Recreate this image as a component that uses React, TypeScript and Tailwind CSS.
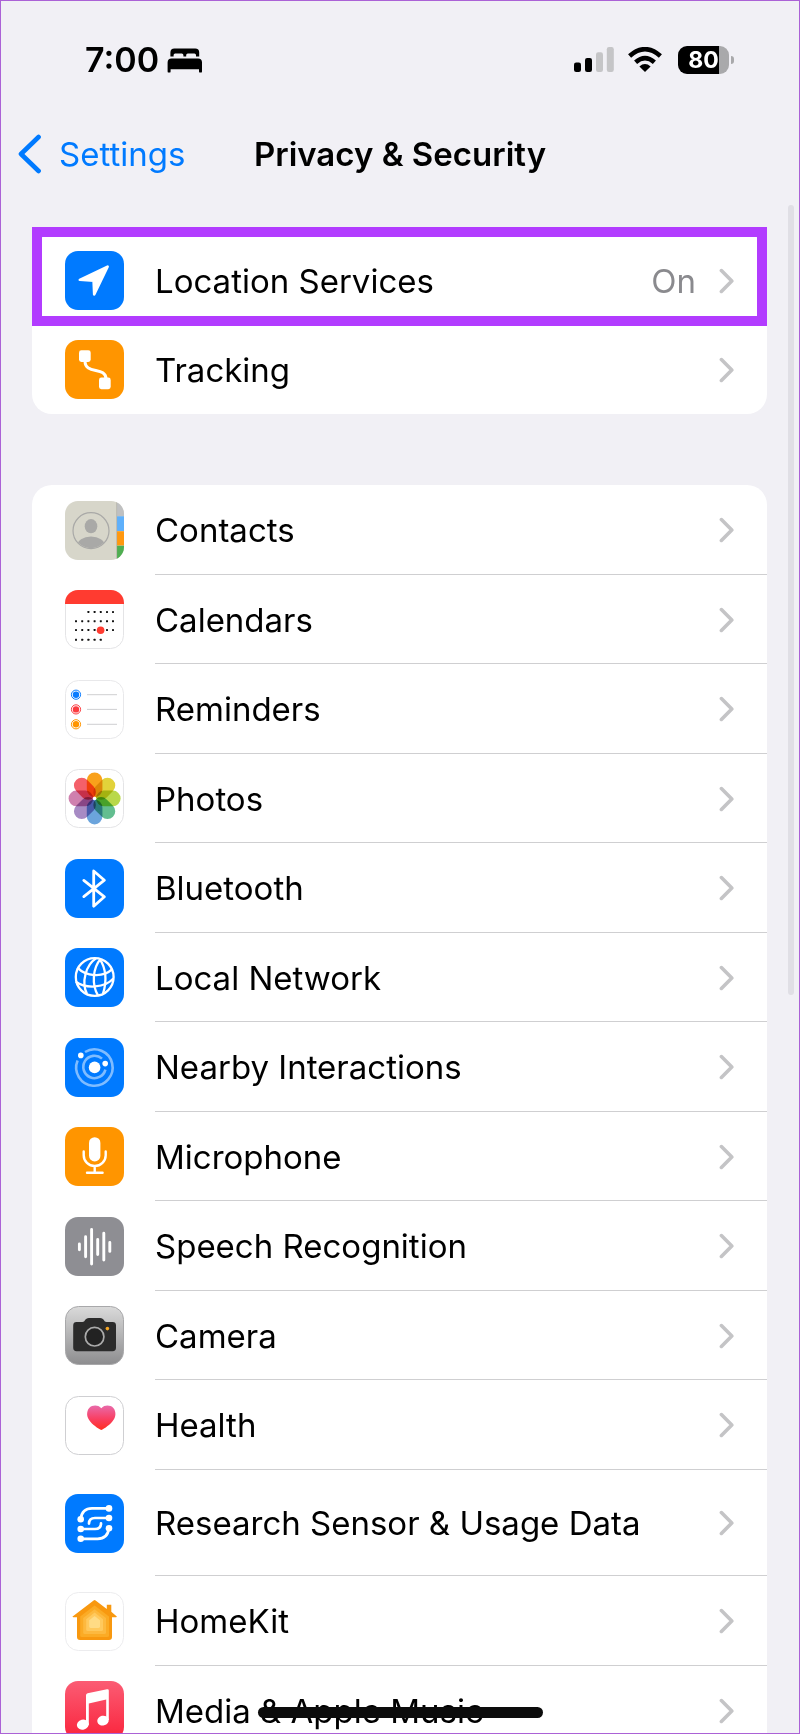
import type { ReactNode } from 'react';

const BLUE = '#007aff';
const ORANGE = '#ff9500';

function Tile({ fill, stroke, children }: { fill: string; stroke?: string; children?: ReactNode }) {
  return (
    <svg viewBox="0 0 59 59" className="size-[59px] shrink-0" fill="none" aria-hidden="true">
      <rect x={stroke ? 0.5 : 0} y={stroke ? 0.5 : 0} width={stroke ? 58 : 59} height={stroke ? 58 : 59} rx="13" fill={fill} stroke={stroke} />
      {children}
    </svg>
  );
}

const LocationIcon = () => (
  <Tile fill={BLUE}>
    <path d="M42.6 15.6 29.2 43.4 28.6 29.8 14.8 28.8Z" fill="#fff" stroke="#fff" strokeWidth="2.6" strokeLinejoin="round" />
  </Tile>
);

const TrackingIcon = () => (
  <Tile fill={ORANGE}>
    <rect x="14" y="10.3" width="11.7" height="11.7" rx="2.4" fill="#fff" />
    <rect x="34" y="37.5" width="11.7" height="11.7" rx="2.4" fill="#fff" />
    <path d="M20 21c0 14 21 5 21 18" stroke="#fff" strokeWidth="3" />
  </Tile>
);

const ContactsIcon = () => (
  <Tile fill="#d7d6ca">
    <clipPath id="contacts-tile"><rect width="59" height="59" rx="13" /></clipPath>
    <clipPath id="contacts-disc"><circle cx="26" cy="29.7" r="17.5" /></clipPath>
    <g clipPath="url(#contacts-tile)">
      <path d="M52 0h7v15h-7z" fill="#bfc0c1" />
      <path d="M52 15.3h7V30h-7z" fill="#5fb0fb" />
      <path d="M52 30.3h7v14.2h-7z" fill="#ff9810" />
      <path d="M52 44.8h7V59h-7z" fill="#4fae51" />
      <path d="M51.6 0v59" stroke="#b4b3a9" strokeWidth=".8" />
    </g>
    <circle cx="26" cy="29.7" r="18" stroke="#a9a9a7" strokeWidth="1.2" />
    <ellipse cx="26" cy="25.2" rx="6.3" ry="7.1" fill="#a9a9a7" />
    <ellipse cx="26" cy="45" rx="14" ry="9.6" fill="#a9a9a7" clipPath="url(#contacts-disc)" />
  </Tile>
);

const dotColumns = [11, 17.2, 23.4, 29.6, 35.8, 42, 48];
const dotRows = [
  { y: 22, from: 2, to: 7 },
  { y: 31.2, from: 0, to: 7 },
  { y: 40, from: 0, to: 7 },
  { y: 49.8, from: 0, to: 5 },
];

const CalendarIcon = () => (
  <Tile fill="#fff" stroke="#e4e4e6">
    <path d="M0 14V13A13 13 0 0 1 13 0H46A13 13 0 0 1 59 13V14Z" fill="#ff3b30" />
    {dotRows.map((row) =>
      dotColumns.slice(row.from, row.to).map((x) => (
        <rect key={`${x}-${row.y}`} x={x - 1} y={row.y - 1} width="2" height="2" rx=".4" fill="#111" />
      )),
    )}
    <circle cx="35.6" cy="40.2" r="3.8" fill="#ff3b30" />
  </Tile>
);

const reminderDots = [
  { y: 14.7, color: '#0a7cff' },
  { y: 29.4, color: '#fb3b3f' },
  { y: 44.3, color: '#ff9500' },
];

const RemindersIcon = () => (
  <Tile fill="#fff" stroke="#e8e8ea">
    {reminderDots.map(({ y, color }) => (
      <g key={y}>
        <circle cx="11" cy={y} r="4.6" stroke={color} strokeWidth="1" />
        <circle cx="11" cy={y} r="3.2" fill={color} />
        <path d={`M22 ${y}H52`} stroke="#c9c9cc" strokeWidth=".9" />
      </g>
    ))}
  </Tile>
);

const petals = ['#f9a11b', '#e2d23a', '#b9d84a', '#63be90', '#6ba4dc', '#a78bc4', '#cf80ae', '#f4606a'];

const PhotosIcon = () => (
  <Tile fill="#fff" stroke="#e4e4e6">
    <g style={{ isolation: 'isolate' }}>
      {petals.map((color, i) => (
        <rect
          key={color}
          x="21.8"
          y="3.4"
          width="15.6"
          height="24.6"
          rx="7.8"
          fill={color}
          style={{ mixBlendMode: 'multiply' }}
          transform={`rotate(${i * 45} 29.6 29.4)`}
        />
      ))}
    </g>
    <circle cx="29.6" cy="29.4" r="1.6" fill="#fff" />
  </Tile>
);

const BluetoothIcon = () => (
  <Tile fill={BLUE}>
    <path d="M18.8 21.4 39.4 37.8 28.7 47.2V12L39.4 21.2 18.8 37.6" stroke="#fff" strokeWidth="2.8" strokeLinecap="round" strokeLinejoin="round" />
  </Tile>
);

const GlobeIcon = () => (
  <Tile fill={BLUE}>
    <g stroke="#fff" strokeWidth="2.3">
      <circle cx="29.7" cy="29" r="18.9" />
      <path d="M31 10.4C21 17 16 34 22 46" />
      <path d="M35.6 11C27.6 20 26.6 37 33 47.4" />
      <path d="M34.6 10.8C41 20 42.2 33 38 45.6" />
      <path d="M12.4 19.6C21 28.6 38 29.8 47 21.4" />
      <path d="M10.8 33.8C21 41 40 40 48.4 30.6" />
    </g>
  </Tile>
);

const NearbyIcon = () => (
  <Tile fill={BLUE}>
    <g stroke="#7fbcff" strokeWidth="2.6">
      <path d="M20 14A18.2 18.2 0 1 1 12.6 22.6" />
      <path d="M40.4 31.6A11.2 11.2 0 1 1 37 20.6" />
    </g>
    <g fill="#fff">
      <circle cx="29.6" cy="29.4" r="5.8" />
      <circle cx="15.8" cy="17.4" r="2.8" />
      <circle cx="40.2" cy="25.6" r="2.8" />
    </g>
  </Tile>
);

const MicrophoneIcon = () => (
  <Tile fill={ORANGE}>
    <rect x="24" y="10.2" width="11.4" height="24.2" rx="5.7" fill="#fff" />
    <path d="M18.7 24.4v3.8a11 10.8 0 0 0 22 0v-3.8M29.7 39v6.6M22 45.8h15.6" stroke="#fff" strokeWidth="2.4" strokeLinecap="round" />
  </Tile>
);

const SpeechIcon = () => (
  <Tile fill="#8e8e93">
    <path d="M14.4 27v5.8M20.6 19.8v20M26.6 12.4v34.6M32.7 22.4v15.2M38.8 16.2v26.8M44.8 25.4v9" stroke="#fff" strokeWidth="2.9" strokeLinecap="round" />
  </Tile>
);

const CameraIcon = () => (
  <Tile fill="url(#camera-bg)" stroke="#a8a8aa">
    <linearGradient id="camera-bg" x1="0" y1="0" x2="0" y2="1">
      <stop stopColor="#dadada" />
      <stop offset="1" stopColor="#8d8d8f" />
    </linearGradient>
    <path d="M8.2 19.4Q8.2 16 11.6 16H17.4C20.4 16 19.6 12 24 12H35C39.4 12 38.6 16 41.6 16H47.6Q51 16 51 19.4V41.8Q51 45.2 47.6 45.2H11.6Q8.2 45.2 8.2 41.8Z" fill="#2b2b2b" />
    <circle cx="29.6" cy="30.7" r="9.3" fill="#222" stroke="#ababab" strokeWidth="1.7" />
    <circle cx="42.4" cy="22.6" r="1.8" fill="#f6a623" />
  </Tile>
);

const HealthIcon = () => (
  <Tile fill="#fff" stroke="#cfcfd2">
    <linearGradient id="heart" x1="0" y1="0" x2="0" y2="1">
      <stop stopColor="#e86bab" />
      <stop offset=".55" stopColor="#f93f62" />
      <stop offset="1" stopColor="#ff2f20" />
    </linearGradient>
    <path d="M36.3 12.2C39 9 43 9 45.6 10C50 11.8 51.6 17.4 49.6 22C47.4 27 41.6 31 37.4 33.6Q36.3 34.2 35.2 33.6C31 31 25.2 27 23 22C21 17.4 22.6 11.8 27 10C29.6 9 33.6 9 36.3 12.2Z" fill="url(#heart)" />
  </Tile>
);

const ResearchIcon = () => (
  <Tile fill={BLUE}>
    <path
      d="M15.7 25C16.6 18 20.4 14.4 27 14.4H44M24 29.6C24 26 26 24 30 24H44M15.7 35H30C34 35 36 33 36 29.4M15.7 44.8H32.6C39 44.8 43 41.2 44 34.2"
      stroke="#fff"
      strokeWidth="2.7"
      strokeLinecap="round"
    />
    <g fill="#fff">
      <circle cx="15.7" cy="25.2" r="3.3" />
      <circle cx="44" cy="14.4" r="3.3" />
      <circle cx="44" cy="24" r="3.3" />
      <circle cx="15.7" cy="35" r="3.3" />
      <circle cx="44" cy="34.2" r="3.3" />
      <circle cx="15.7" cy="44.8" r="3.3" />
    </g>
  </Tile>
);

const HomeIcon = () => (
  <Tile fill="#fff" stroke="#ececee">
    <path d="M41.8 12.8H46.3V19.8L51.8 24.4Q52 25.2 51 25.2H47V45Q47 48 44 48H15Q12 48 12 45V25.2H8.4Q7.2 25.2 7.6 24.4L28.6 8.4Q29.6 7.6 30.6 8.4L41.8 17Z" fill="#f8980f" />
    <path d="M29.6 13.4 44 24.4V43.4Q44 45 42.4 45H16.8Q15.2 45 15.2 43.4V24.4Z" fill="#fbab25" />
    <path d="M29.6 17.2 41 26V40.4Q41 42 39.4 42H19.8Q18.2 42 18.2 40.4V26Z" fill="#fdb93f" />
    <path d="M29.6 20.6 38 27.2V37.4Q38 39 36.4 39H22.8Q21.2 39 21.2 37.4V27.2Z" fill="#ffc95d" />
    <path d="M29.6 24 35 28.2V34.6Q35 36 33.6 36H25.6Q24.2 36 24.2 34.6V28.2Z" fill="#ffdb85" />
  </Tile>
);

const MusicIcon = () => (
  <Tile fill="url(#music-bg)">
    <linearGradient id="music-bg" x1="0" y1="0" x2="0" y2="1">
      <stop stopColor="#fb5c74" />
      <stop offset="1" stopColor="#fa233b" />
    </linearGradient>
    <g fill="#fff">
      <path d="M21 14.2Q21 12.6 22.6 12.2L42 8.2Q43.8 7.8 43.8 9.6V39H41.2V18.6L23.8 22.4V44H21Z" />
      <ellipse cx="17.8" cy="43.6" rx="6" ry="5" transform="rotate(-14 17.8 43.6)" />
      <ellipse cx="38" cy="39.6" rx="5.8" ry="4.9" transform="rotate(-14 38 39.6)" />
    </g>
  </Tile>
);

interface Item {
  label: string;
  icon: () => ReactNode;
  value?: string;
  tall?: boolean;
  struck?: string;
}

const trackingItems: Item[] = [
  { label: 'Location Services', icon: LocationIcon, value: 'On' },
  { label: 'Tracking', icon: TrackingIcon },
];

const accessItems: Item[] = [
  { label: 'Contacts', icon: ContactsIcon },
  { label: 'Calendars', icon: CalendarIcon },
  { label: 'Reminders', icon: RemindersIcon },
  { label: 'Photos', icon: PhotosIcon },
  { label: 'Bluetooth', icon: BluetoothIcon },
  { label: 'Local Network', icon: GlobeIcon },
  { label: 'Nearby Interactions', icon: NearbyIcon },
  { label: 'Microphone', icon: MicrophoneIcon },
  { label: 'Speech Recognition', icon: SpeechIcon },
  { label: 'Camera', icon: CameraIcon },
  { label: 'Health', icon: HealthIcon },
  { label: 'Research Sensor & Usage Data', icon: ResearchIcon, tall: true },
  { label: 'HomeKit', icon: HomeIcon },
  { label: 'Media', icon: MusicIcon, struck: '& Apple Music' },
];

function Row({ item, divided }: { item: Item; divided: boolean }) {
  const Icon = item.icon;
  return (
    <a href="#" className={`flex items-center pl-[33px] ${item.tall ? 'h-[106px]' : 'h-[90px] group-even:h-[89px]'}`}>
      <Icon />
      <span className={`ml-[31px] flex flex-1 items-center self-stretch pt-px pr-[33px] ${divided ? 'border-b border-[#cfcfd1]' : ''}`}>
        <span className="flex-1 whitespace-nowrap">
          {item.label}
          {item.struck && (
            <>
              {' '}
              <span className="relative">
                {item.struck}
                <span className="absolute top-4 -left-0.5 h-[11px] w-[285px] rounded-full bg-[#0c0c0c]" />
              </span>
            </>
          )}
        </span>
        {item.value && <span className="mr-[23px] text-[#8a8a8e]">{item.value}</span>}
        <svg viewBox="0 0 15 26" className="h-[26px] w-[15px] shrink-0" fill="none" aria-hidden="true">
          <path d="M2.4 2.6 12.8 13 2.4 23.4" stroke="#c4c4c6" strokeWidth="3.6" strokeLinecap="round" strokeLinejoin="round" />
        </svg>
      </span>
    </a>
  );
}

function StatusBar() {
  return (
    <div className="flex h-[118px] items-center justify-between pr-[65px] pl-[84px]">
      <div className="flex items-center gap-2">
        <time className="text-[34px] leading-10 font-semibold">7:00</time>
        <svg viewBox="0 0 36 25" className="h-[25px] w-9" aria-hidden="true">
          <path d="M3.4 8.4V4.4Q3.4.4 7.4.4H28.2Q32.2.4 32.2 4.4V8.4H29V7Q29 5.4 27.4 5.4H20.8Q19.2 5.4 19.2 7V8.4H16.4V7Q16.4 5.4 14.8 5.4H8.2Q6.6 5.4 6.6 7V8.4Z" />
          <path d="M.6 14.6Q.6 10.6 4.6 10.6H31Q35 10.6 35 14.6V23.4Q35 24.6 33.8 24.6H33.2Q32 24.6 32 23.4V21.2H3.6V23.4Q3.6 24.6 2.4 24.6H1.8Q.6 24.6 .6 23.4Z" />
        </svg>
      </div>
      <div className="flex items-center">
        <svg viewBox="0 0 40 26" className="h-[26px] w-10" aria-hidden="true">
          <rect x="0" y="15.4" width="7" height="9.6" rx="2.2" />
          <rect x="11" y="11" width="7" height="14" rx="2.2" />
          <rect x="22" y="5.2" width="7" height="19.8" rx="2.2" fill="#c5c5c7" />
          <rect x="32.8" y="0" width="7" height="25" rx="2.2" fill="#c5c5c7" />
        </svg>
        <svg viewBox="0 0 34 26" className="ml-3.5 h-[26px] w-[34px]" aria-hidden="true">
          <path d="M17 25 11.4 19.4Q17 14.6 22.6 19.4Z" />
          <path d="M7.6 15.2Q17 7 26.4 15.2" fill="none" stroke="#000" strokeWidth="4.6" />
          <path d="M1.6 9Q17-4.6 32.4 9" fill="none" stroke="#000" strokeWidth="4.6" />
        </svg>
        <div className="ml-4 flex h-7 w-[51px] items-center justify-center overflow-hidden rounded-[9px] bg-linear-to-r from-black from-80% to-[#a9a9ab] to-80% text-[23px] leading-7 font-bold text-white">
          80
        </div>
        <span className="ml-0.5 h-2 w-[3px] rounded-r-full bg-[#a9a9ab]" />
      </div>
    </div>
  );
}

export default function App() {
  return (
    <div className="relative h-screen overflow-hidden border border-[#ab62d6] bg-[#f1f0f5] font-['Inter','Liberation_Sans',sans-serif] text-[33px] leading-10 text-black">
      <StatusBar />
      <header className="grid h-[70px] grid-cols-[1fr_auto_1fr] items-center">
        <a href="#" className="flex items-center gap-[17px] pl-[17px] text-[#007aff]">
          <svg viewBox="0 0 24 40" className="h-10 w-6" fill="none" aria-hidden="true">
            <path d="M20.6 3 3 20 20.6 37" stroke="#007aff" strokeWidth="4.6" strokeLinecap="round" strokeLinejoin="round" />
          </svg>
          Settings
        </a>
        <h1 className="font-semibold">Privacy &amp; Security</h1>
      </header>

      <main className="mt-[46px] mr-8 ml-[31px] flex flex-col gap-[71px]">
        <section className="relative rounded-[20px] bg-white">
          <ul>
            {trackingItems.map((item) => (
              <li key={item.label} className="group">
                <Row item={item} divided={false} />
              </li>
            ))}
          </ul>
          <div className="pointer-events-none absolute inset-x-0 -top-2 h-[99px] border-10 border-[#b23cff]" />
        </section>
        <section className="rounded-t-[20px] bg-white">
          <ul>
            {accessItems.map((item, i) => (
              <li key={item.label} className="group">
                <Row item={item} divided={i < accessItems.length - 1} />
              </li>
            ))}
          </ul>
        </section>
      </main>

      <div className="absolute top-[204px] right-[5px] h-[790px] w-1.5 rounded-full bg-[#e0dfe5]" />
    </div>
  );
}
